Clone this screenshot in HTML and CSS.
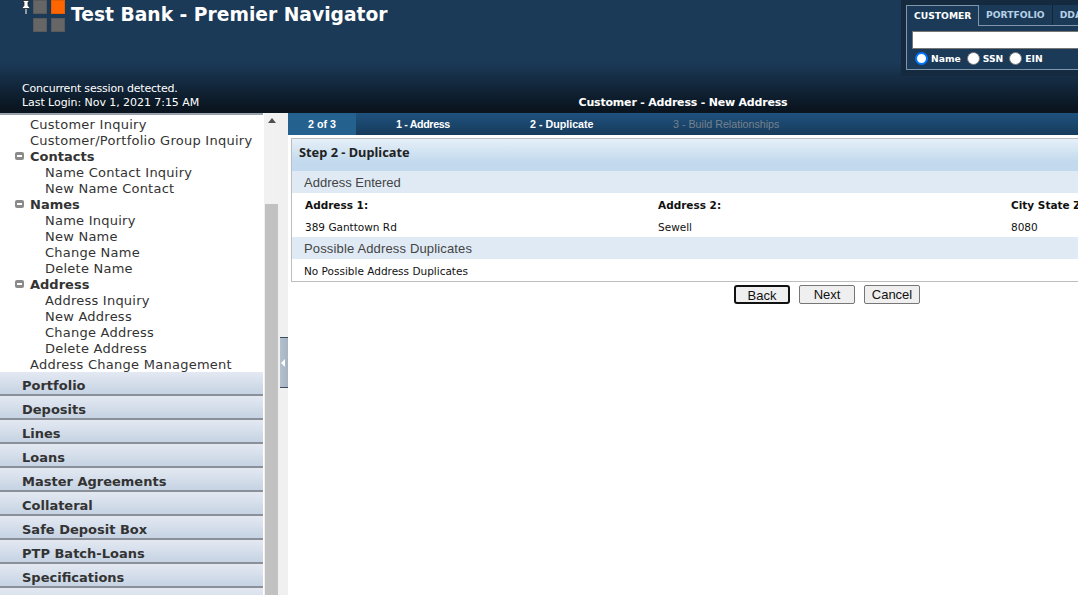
FILE: index.html
```html
<!DOCTYPE html>
<html lang="en">
<head>
<meta charset="utf-8">
<title>Premier Navigator</title>
<link rel="stylesheet" href="styles.css">
</head>
<body>
<div class="app">
  <header class="top">
    <div class="top-left">
      <div class="brand">
        <svg class="pin" width="10" height="14" viewBox="0 0 10 14"><path d="M2 0.5h6v1.5H7v3.5l1.5 2v1H1.500v-1L3 5.500V2H2z" fill="#fff" stroke="#222" stroke-width="0.8"/><path d="M5 9v5" stroke="#ddd" stroke-width="1.200"/></svg>
        <div class="logo"><i></i><i class="hot"></i><i></i><i></i></div>
        <h1>Test Bank - Premier Navigator</h1>
      </div>
      <div class="login"><div class="login-a">Concurrent session detected.</div><div class="login-b">Last Login: Nov 1, 2021 7:15 AM</div></div>
    </div>
    <div class="top-right">
      <div class="search">
        <div class="tabs">
          <span class="tab active">CUSTOMER</span><span class="tab">PORTFOLIO</span><span class="tab">DDA</span>
        </div>
        <div class="search-body">
          <div class="field"></div>
          <div class="radios">
            <span class="radio on"></span><span class="rlabel">Name</span>
            <span class="radio"></span><span class="rlabel">SSN</span>
            <span class="radio"></span><span class="rlabel">EIN</span>
          </div>
        </div>
      </div>
      <div class="page-title">Customer - Address - New Address</div>
    </div>
  </header>
  <div class="main">
    <aside class="side">
      <div class="menu">
        <div class="tree">
          <div class="l1">Customer Inquiry</div>
          <div class="l1">Customer/Portfolio Group Inquiry</div>
          <div class="grp"><span class="minus"></span>Contacts</div>
          <div class="l2">Name Contact Inquiry</div>
          <div class="l2">New Name Contact</div>
          <div class="grp"><span class="minus"></span>Names</div>
          <div class="l2">Name Inquiry</div>
          <div class="l2">New Name</div>
          <div class="l2">Change Name</div>
          <div class="l2">Delete Name</div>
          <div class="grp"><span class="minus"></span>Address</div>
          <div class="l2">Address Inquiry</div>
          <div class="l2">New Address</div>
          <div class="l2">Change Address</div>
          <div class="l2">Delete Address</div>
          <div class="l1">Address Change Management</div>
        </div>
        <div class="acc">Portfolio</div>
        <div class="acc">Deposits</div>
        <div class="acc">Lines</div>
        <div class="acc">Loans</div>
        <div class="acc">Master Agreements</div>
        <div class="acc">Collateral</div>
        <div class="acc">Safe Deposit Box</div>
        <div class="acc">PTP Batch-Loans</div>
        <div class="acc">Specifications</div>
        <div class="acc"></div>
      </div>
      <div class="sbar">
        <span class="sarrow"></span>
        <span class="sthumb"></span>
      </div>
      <div class="split"><span class="handle"><span class="harrow"></span></span></div>
    </aside>
    <main class="content">
      <nav class="steps">
        <span class="count">2 of 3</span>
        <span class="step s1">1 - Address</span>
        <span class="step s2">2 - Duplicate</span>
        <span class="step s3 off">3 - Build Relationships</span>
      </nav>
      <section class="panel">
        <h2>Step 2 - Duplicate</h2>
        <h3>Address Entered</h3>
        <div class="cols heads"><b>Address 1:</b><b>Address 2:</b><b>City State Zip:</b></div>
        <div class="cols vals"><span>389 Ganttown Rd</span><span>Sewell</span><span>8080</span></div>
        <h3 class="wide">Possible Address Duplicates</h3>
        <div class="none">No Possible Address Duplicates</div>
      </section>
      <div class="actions">
        <button class="btn focus">Back</button>
        <button class="btn">Next</button>
        <button class="btn">Cancel</button>
      </div>
    </main>
  </div>
</div>
</body>
</html>
```
FILE: styles.css
```css
* { box-sizing: border-box; }
html, body { margin: 0; height: 100%; overflow: hidden; background: #fff; }
body { font-family: "DejaVu Sans", Verdana, sans-serif; color: #333; }
.app { width: 1078px; height: 595px; display: flex; flex-direction: column; overflow: hidden; }

.top {
  height: 113px; flex: none; display: flex; color: #fff;
  background: linear-gradient(#1b3a58 0, #1b3a58 62px, #0a1520 108px, #0a1520 100%);
}
.top-left { width: 288px; flex: none; display: flex; flex-direction: column; justify-content: space-between; }
.brand { display: flex; align-items: flex-start; padding-left: 21px; white-space: nowrap; }
.pin { flex: none; }
.logo { flex: none; width: 32px; height: 32px; margin-left: 2px; display: grid; grid-template-columns: 14px 14px; grid-template-rows: 14px 14px; gap: 4px; }
.logo i { background: #666; border: 1px solid #5a5a5a; }
.logo i.hot { background: #ff6600; border-color: #e85c00; }
.brand h1 { margin: 0 0 0 6px; font: bold 18.700px/30px "DejaVu Sans", Verdana, sans-serif; color: #fff; }
.login { padding: 0 0 4px 22px; font-size: 11px; line-height: 13.500px; white-space: nowrap; }
.login-a { letter-spacing: -0.200px; }
.login-b { letter-spacing: -0.060px; }
.top-right { flex: 1; min-width: 0; display: flex; flex-direction: column; justify-content: space-between; }
.search { margin-left: 613px; width: 300px; height: 76px; padding: 5px 0 0 5px; background: #15293f; }
.tabs { display: flex; height: 20px; font-size: 9.200px; font-weight: bold; }
.tab { padding: 0 7px; line-height: 19px; color: #b6d0e6; background: #1b3a58; border-right: 1px solid #12263a; }
.tab.active { color: #fff; width: 73px; padding: 0 7px; background: #1b3a58; border: 1px solid #7f97ad; border-bottom: 0; height: 21px; position: relative; z-index: 1; }
.search-body { height: 45px; padding: 5px 0 0 5px; background: #1b3a58; border: 1px solid #7f97ad; }
.field { height: 18px; background: #fff; border: 1px solid #767676; }
.radios { display: flex; align-items: center; height: 19px; padding-left: 3px; font-size: 9.200px; font-weight: bold; color: #fff; }
.radio { width: 13px; height: 13px; border-radius: 50%; background: #fff; border: 1px solid #767676; flex: none; }
.radio.on { border: 2px solid #0075ff; box-shadow: inset 0 0 0 1px #fff; background: #fff; }
.rlabel { margin: 0 6px 0 3px; }
.page-title { width: 790px; text-align: center; font-size: 11px; font-weight: bold; line-height: 13px; padding-bottom: 4px; white-space: nowrap; letter-spacing: -0.200px; }

.main { flex: 1; min-height: 0; display: flex; }
.side { width: 288px; flex: none; display: flex; }
.menu { width: 263px; flex: none; border-top: 2px solid #9aa3ad; padding-top: 1px; margin-right: 1px; overflow: hidden; }
.tree { font-size: 13px; line-height: 16px; white-space: nowrap; padding-top: 1px; margin-bottom: -1px; }
.l1 { padding-left: 30px; color: #333; letter-spacing: 0.260px; }
.l2 { padding-left: 45px; color: #333; letter-spacing: 0.240px; }
.grp { padding-left: 15px; font-weight: bold; display: flex; align-items: center; color: #333; }
.minus { width: 9px; height: 8px; margin-right: 6px; border-radius: 2px; background: #8a8a8a; position: relative; top: -1px; display: flex; align-items: center; justify-content: center; }
.minus::after { content: ""; width: 5px; height: 2px; background: #fff; }
.acc {
  height: 24px; padding: 2px 0 0 22px; font-size: 13px; font-weight: bold; line-height: 24px; color: #333; overflow: hidden;
  background: linear-gradient(#e3e9f2, #c6d3e3); border-bottom: 2px solid #8a8f98;
}
.sbar { width: 15px; flex: none; background: #f1f1f1; display: flex; flex-direction: column; align-items: center; }
.sarrow { width: 0; height: 0; margin-top: 5px; border: 4px solid transparent; border-top: 0; border-bottom: 5px solid #505050; }
.sthumb { width: 13px; flex: 1; margin-top: 81px; background: #c1c1c1; }
.split { width: 9px; flex: none; background: #f0f0f0; padding: 224px 0 0 1px; }
.handle { display: flex; align-items: center; padding-left: 1px; width: 8px; height: 51px; background: linear-gradient(90deg, #b4c0cc, #a6b3c1); border-top: 1px solid #3b4d60; border-bottom: 1px solid #3b4d60; }
.harrow { width: 0; height: 0; border: 4px solid transparent; border-left: 0; border-right: 4px solid #fff; }

.content { flex: 1; min-width: 0; overflow: hidden; }
.steps {
  height: 22px; display: flex; align-items: center; white-space: nowrap;
  font: bold 10.700px/22px "Liberation Sans", Arial, sans-serif; color: #fff;
  background: linear-gradient(#1f527f, #173b5b);
}
.count { width: 68px; text-align: center; background: #24618f; height: 22px; }
.step { flex: none; }
.s1 { margin-left: 40px; width: 134px; letter-spacing: -0.350px; }
.s2 { width: 143px; }
.off { color: #77818b; font-weight: normal; }
.panel { width: 1072px; margin: 3px 0 0 3px; border: 1px solid #bdbdbd; background: #fff; }
.panel h2 {
  margin: 0; height: 32px; padding-left: 7px; font: bold 12.800px/26px "Noto Sans", Tahoma, sans-serif; color: #222;
  background: linear-gradient(#e6f0f8, #c3daee 70%);
}
.panel h3 { margin: 0; height: 22px; padding: 1px 0 0 12px; font: normal 13px/22px "Liberation Sans", Arial, sans-serif; color: #444; background: #dfeaf5; }
.panel h3.wide { letter-spacing: 0.150px; }
.cols { display: grid; grid-template-columns: repeat(3, 353px); padding: 1px 0 0 13px; font-size: 10.500px; color: #111; }
.heads { height: 22px; line-height: 22px; }
.vals { height: 22px; line-height: 22px; }
.none { height: 22px; padding: 1px 0 0 12px; font-size: 10.500px; line-height: 22px; color: #111; }
.actions { display: flex; justify-content: center; gap: 9px; width: 1078px; padding-top: 3px; }
.btn { width: 56px; height: 19px; padding: 0; font: 13px/17px "Liberation Sans", Arial, sans-serif; color: #111; background: #efefef; border: 1px solid #767676; border-radius: 2px; }
.btn.focus { border: 2px solid #111; border-radius: 3px; }
```
